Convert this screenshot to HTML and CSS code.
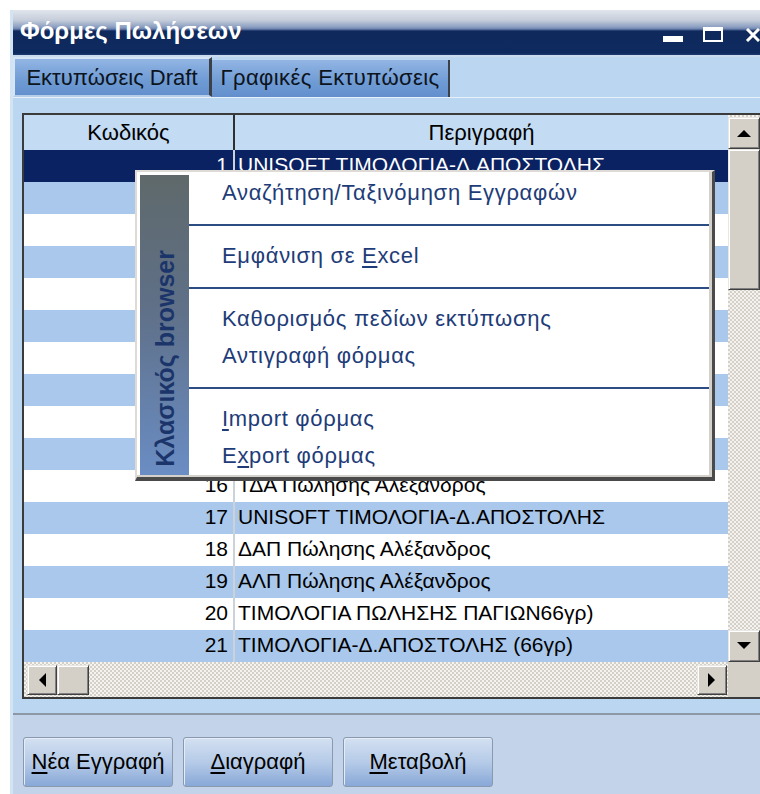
FILE: index.html
```html
<!DOCTYPE html>
<html lang="el">
<head>
<meta charset="utf-8">
<title>Φόρμες Πωλήσεων</title>
<link rel="stylesheet" href="styles.css">
</head>
<body>
<div class="window">
  <header class="titlebar">
    <span class="title">Φόρμες Πωλήσεων</span>
    <div class="caption">
      <span class="cap-btn"><i class="cap-min"></i></span>
      <span class="cap-btn"><i class="cap-max"></i></span>
      <span class="cap-btn"><svg class="cap-close" width="16" height="14" viewBox="0 0 16 14"><path d="M2 1 L14 13 M14 1 L2 13" stroke="#fff" stroke-width="3" fill="none"/></svg></span>
    </div>
  </header>

  <div class="tabctl">
    <div class="tabs">
      <div class="tab tab-active">Εκτυπώσεις Draft</div>
      <div class="tab">Γραφικές Εκτυπώσεις</div>
    </div>
    <div class="tabpage">
      <div class="grid">
        <div class="view">
          <div class="head">
            <div class="hcell hcode">Κωδικός</div>
            <div class="hcell hdesc">Περιγραφή</div>
          </div>
          <div class="rows">
            <div class="row row-sel"><span class="c-code">1</span><span class="c-desc">UNISOFT ΤΙΜΟΛΟΓΙΑ-Δ.ΑΠΟΣΤΟΛΗΣ</span></div>
            <div class="row"><span class="c-code"></span><span class="c-desc"></span></div>
            <div class="row"><span class="c-code"></span><span class="c-desc"></span></div>
            <div class="row"><span class="c-code"></span><span class="c-desc"></span></div>
            <div class="row"><span class="c-code"></span><span class="c-desc"></span></div>
            <div class="row"><span class="c-code"></span><span class="c-desc"></span></div>
            <div class="row"><span class="c-code"></span><span class="c-desc"></span></div>
            <div class="row"><span class="c-code"></span><span class="c-desc"></span></div>
            <div class="row"><span class="c-code"></span><span class="c-desc"></span></div>
            <div class="row"><span class="c-code"></span><span class="c-desc"></span></div>
            <div class="row"><span class="c-code">16</span><span class="c-desc">ΤΔΑ Πώλησης Αλέξανδρος</span></div>
            <div class="row"><span class="c-code">17</span><span class="c-desc">UNISOFT ΤΙΜΟΛΟΓΙΑ-Δ.ΑΠΟΣΤΟΛΗΣ</span></div>
            <div class="row"><span class="c-code">18</span><span class="c-desc">ΔΑΠ Πώλησης Αλέξανδρος</span></div>
            <div class="row"><span class="c-code">19</span><span class="c-desc">ΑΛΠ Πώλησης Αλέξανδρος</span></div>
            <div class="row"><span class="c-code">20</span><span class="c-desc">ΤΙΜΟΛΟΓΙΑ ΠΩΛΗΣΗΣ ΠΑΓΙΩΝ66γρ)</span></div>
            <div class="row"><span class="c-code">21</span><span class="c-desc">ΤΙΜΟΛΟΓΙΑ-Δ.ΑΠΟΣΤΟΛΗΣ (66γρ)</span></div>
          </div>
        </div>
        <div class="vscroll">
          <span class="sb-btn"><svg width="14" height="8" viewBox="0 0 14 8"><polygon points="0,8 14,8 7,1" fill="#000"/></svg></span>
          <span class="sb-thumb"></span>
          <span class="sb-track"></span>
          <span class="sb-btn"><svg width="14" height="8" viewBox="0 0 14 8"><polygon points="0,0 14,0 7,7" fill="#000"/></svg></span>
        </div>
        <div class="hscroll">
          <span class="sb-btn"><svg width="8" height="14" viewBox="0 0 8 14"><polygon points="8,0 8,14 1,7" fill="#000"/></svg></span>
          <span class="sb-thumb"></span>
          <span class="sb-track"></span>
          <span class="sb-btn"><svg width="8" height="14" viewBox="0 0 8 14"><polygon points="0,0 0,14 7,7" fill="#000"/></svg></span>
        </div>
        <div class="corner"></div>
      </div>
    </div>
  </div>

  <div class="footer">
    <button class="btn" type="button"><u>Ν</u>έα Εγγραφή</button>
    <button class="btn" type="button"><u>Δ</u>ιαγραφή</button>
    <button class="btn" type="button"><u>Μ</u>εταβολή</button>
  </div>

  <div class="popup">
    <div class="popup-band"><span>Κλασικός browser</span></div>
    <ul class="menu">
      <li class="item">Αναζήτηση/Ταξινόμηση Εγγραφών</li>
      <li class="sep"></li>
      <li class="item">Εμφάνιση σε <u>E</u>xcel</li>
      <li class="sep"></li>
      <li class="item">Καθορισμός πεδίων εκτύπωσης</li>
      <li class="item">Αντιγραφή φόρμας</li>
      <li class="sep"></li>
      <li class="item"><u>I</u>mport φόρμας</li>
      <li class="item">E<u>x</u>port φόρμας</li>
    </ul>
  </div>
</div>
</body>
</html>
```

FILE: styles.css
```css
* { box-sizing: border-box; }

html, body { margin: 0; padding: 0; }

body {
  width: 760px;
  height: 794px;
  overflow: hidden;
  background: #fff;
  font-family: "Liberation Sans", Arial, "DejaVu Sans", sans-serif;
  font-size: 22px;
  color: #000;
}

/* ---------- window frame ---------- */
.window {
  position: relative;
  margin: 10px 0 0 10px;
  width: 766px;
  height: 784px;
  border-left: 3px solid #d2e3f4;
  display: flex;
  flex-direction: column;
  background: #bad6f0;
}

.titlebar {
  flex: none;
  height: 45px;
  display: flex;
  align-items: flex-start;
  background: linear-gradient(#e1e5ec 0, #c6cedb 10px, #8c9fc1 17px, #6c83b0 19px, #10295d 21px, #0d2a5e 43px, #1d3c72 45px);
}

.title {
  color: #fff;
  font-weight: bold;
  font-size: 24px;
  line-height: 24px;
  padding: 9px 0 0 7px;
}

.caption {
  margin-left: auto;
  height: 32px;
  display: flex;
  align-items: flex-end;
  gap: 4px;
  padding-right: 5px;
}

.cap-btn {
  width: 36px;
  height: 24px;
  display: flex;
  align-items: flex-end;
  justify-content: center;
}

.cap-min {
  display: block;
  width: 20px;
  height: 6px;
  background: #fff;
}

.cap-max {
  display: block;
  width: 20px;
  height: 15px;
  border: 2px solid #fff;
  border-top-width: 4px;
}

.cap-close { display: block; }

/* ---------- tab control ---------- */
.tabctl {
  flex: none;
  display: flex;
  flex-direction: column;
}

.tabs {
  height: 42px;
  display: flex;
  align-items: flex-end;
  border-top: 2px solid #c9dcef;
}

.tab {
  height: 37px;
  width: 238px;
  text-align: center;
  line-height: 35px;
  letter-spacing: 0.4px;
  color: #0c1420;
  background: linear-gradient(#92b5e4, #6f9bd4 60%, #6390cd);
  border-right: 2px solid #3b4049;
}

.tab-active {
  width: 199px;
  height: 40px;
  line-height: 37px;
  letter-spacing: 0;
  border: 2px solid #d6e5f6;
  border-right: 3px solid #3b4049;
  border-bottom-color: #b5cde9;
}

.tabpage {
  height: 618px;
  border-top: 1px solid #e6f0fb;
  border-bottom: 2px solid #8d98a6;
  padding: 15px 0 0 9px;
}

/* ---------- data grid ---------- */
.grid {
  width: 740px;
  height: 586px;
  border: 2px solid #3b3b3b;
  display: grid;
  grid-template-columns: 704px 32px;
  grid-template-rows: 547px 35px;
  background: #fff;
}

.view {
  overflow: hidden;
  display: flex;
  flex-direction: column;
}

.head {
  flex: none;
  height: 35px;
  display: flex;
  background: #c3dbf3;
}

.hcell {
  line-height: 33px;
  padding-top: 1px;
  text-align: center;
}

.hcode {
  width: 211px;
  border-right: 2px solid #2f2f2f;
}

.hdesc { flex: 1; }

.row {
  height: 32px;
  display: flex;
  font-size: 21px;
  line-height: 30px;
  white-space: nowrap;
  background: #fff;
}

.row:nth-child(even) { background: #a9c8ec; }

.row-sel,
.row-sel:nth-child(even) {
  background: #0b2262;
  color: #fff;
}

.c-code {
  width: 209px;
  text-align: right;
  padding-right: 5px;
}

.c-desc {
  flex: 1;
  border-left: 2px solid #ccd2d9;
  padding-left: 3px;
}

/* ---------- scroll bars ---------- */
.vscroll,
.hscroll {
  display: flex;
  background: repeating-conic-gradient(#d4d0c8 0 25%, #f4f3f0 0 50%) 0 0 / 4px 4px;
}

.vscroll {
  flex-direction: column;
  padding-top: 2px;
}

.hscroll {
  padding: 3px 1px 2px 3px;
}

.sb-btn {
  flex: none;
  width: 32px;
  height: 32px;
  display: flex;
  align-items: center;
  justify-content: center;
  background: #d4d0c8;
  border: 1px solid;
  border-color: #e9e7e3 #404040 #404040 #e9e7e3;
  box-shadow: inset 1px 1px 0 #fff, inset -1px -1px 0 #808080;
}

.hscroll .sb-btn {
  width: 30px;
  height: 30px;
}

.sb-thumb {
  flex: none;
  background: #d4d0c8;
  border: 1px solid;
  border-color: #e9e7e3 #404040 #404040 #e9e7e3;
  box-shadow: inset 1px 1px 0 #fff, inset -1px -1px 0 #808080;
}

.vscroll .sb-thumb { height: 141px; }
.hscroll .sb-thumb { width: 32px; }

.sb-track { flex: 1; }

.corner { background: #d4d0c8; }

/* ---------- footer buttons ---------- */
.footer {
  flex: 1;
  display: flex;
  align-items: flex-start;
  gap: 10px;
  padding: 22px 0 0 10px;
  background: #c2d3ea;
}

.btn {
  width: 150px;
  height: 50px;
  padding: 0;
  font: inherit;
  color: #000;
  border: 1px solid #8a99ad;
  border-radius: 3px;
  background: linear-gradient(#d3e0f1, #b6cbe8 50%, #88a8d7);
  box-shadow: inset 1px 1px 0 #e4ecf7;
}

.btn u,
.item u {
  text-underline-offset: 3px;
  text-decoration-thickness: 2px;
}

/* ---------- context menu ---------- */
.popup {
  position: absolute;
  left: 122px;
  top: 160px;
  width: 580px;
  height: 311px;
  display: flex;
  background: #fff;
  border-style: solid;
  border-width: 2px 3px 4px 2px;
  border-color: #dedbd6 #4a4a4a #4a4a4a #dedbd6;
  padding: 3px 3px 2px 3px;
  box-shadow: inset -3px -2px 0 #d4d1cc;
}

.popup-band {
  flex: none;
  width: 49px;
  height: 300px;
  display: flex;
  flex-direction: column;
  justify-content: flex-end;
  align-items: center;
  padding-bottom: 8px;
  background: linear-gradient(#5f696b, #5f7088 45%, #6a8dc4);
}

.popup-band span {
  writing-mode: vertical-rl;
  transform: rotate(180deg);
  font-weight: bold;
  font-size: 25px;
  line-height: 30px;
  color: #1b356a;
  white-space: nowrap;
}

.menu {
  flex: 1;
  list-style: none;
  margin: 0;
  padding: 0;
  color: #1e3c78;
}

.item {
  height: 37px;
  line-height: 36px;
  padding-left: 33px;
  letter-spacing: 0.7px;
  white-space: nowrap;
}

.sep {
  height: 26px;
  background: linear-gradient(transparent 12px, #2c4c84 12px, #2c4c84 14px, transparent 14px);
}
```
